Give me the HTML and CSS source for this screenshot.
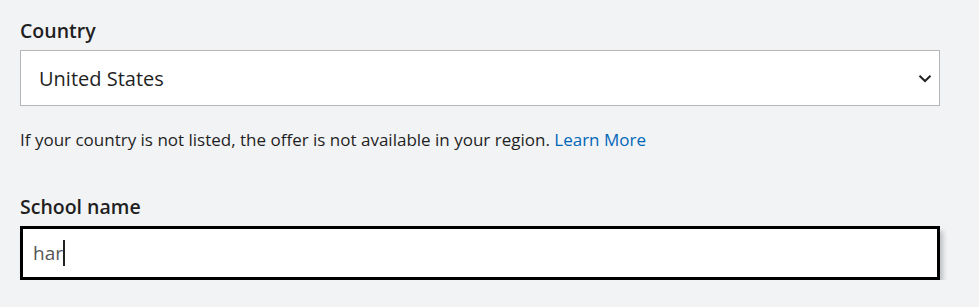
FILE: index.html
```html
<!DOCTYPE html>
<html lang="en">
<head>
  <meta charset="UTF-8">
  <meta name="viewport" content="width=device-width, initial-scale=1.0">
  <title>School verification</title>
  <link rel="stylesheet" href="styles.css">
</head>
<body>
  <form class="verify-form">
    <div class="field">
      <label class="field-label">Country</label>
      <div class="select-box">
        <span class="select-value">United States</span>
        <svg class="chevron" width="14" height="9" viewBox="0 0 14 9">
          <path d="M1.5 1.8 L7 7 L12.5 1.8" fill="none" stroke="#222" stroke-width="2"/>
        </svg>
      </div>
      <p class="hint">If your country is not listed, the offer is not available in your region. <a href="#" class="link">Learn More</a></p>
    </div>

    <div class="field">
      <label class="field-label">School name</label>
      <div class="text-box">
        <span class="typed">har</span><span class="caret"></span>
      </div>
    </div>
  </form>
</body>
</html>
```

FILE: styles.css
```css
body {
  margin: 0;
  background: #f2f3f5;
  font-family: 'Open Sans', 'Noto Sans', sans-serif;
  color: #1f1f1f;
}

.verify-form {
  padding: 19px 0 0 20px;
  width: 920px;
}

.field-label {
  display: block;
  font-size: 19.5px;
  font-weight: 600;
  line-height: 24px;
  margin-bottom: 7px;
}

.select-box {
  display: flex;
  align-items: center;
  justify-content: space-between;
  height: 56px;
  box-sizing: border-box;
  border: 1px solid #b6b6b6;
  background: #fff;
  padding: 0 7px 0 18px;
}

.select-value {
  font-size: 20px;
}

.chevron {
  display: block;
}

.hint {
  margin: 22px 0 43px;
  font-size: 17px;
  line-height: 24px;
}

.link {
  color: #0067b8;
  text-decoration: none;
}

.text-box {
  display: flex;
  align-items: center;
  height: 54px;
  box-sizing: border-box;
  border: 3px solid #000;
  background: #fff;
  padding: 0 10px;
  box-shadow: 3px 5px 5px rgba(0, 0, 0, 0.22);
}

.typed {
  font-size: 19px;
  color: #555;
}

.caret {
  width: 2px;
  height: 26px;
  background: #222;
}
```
